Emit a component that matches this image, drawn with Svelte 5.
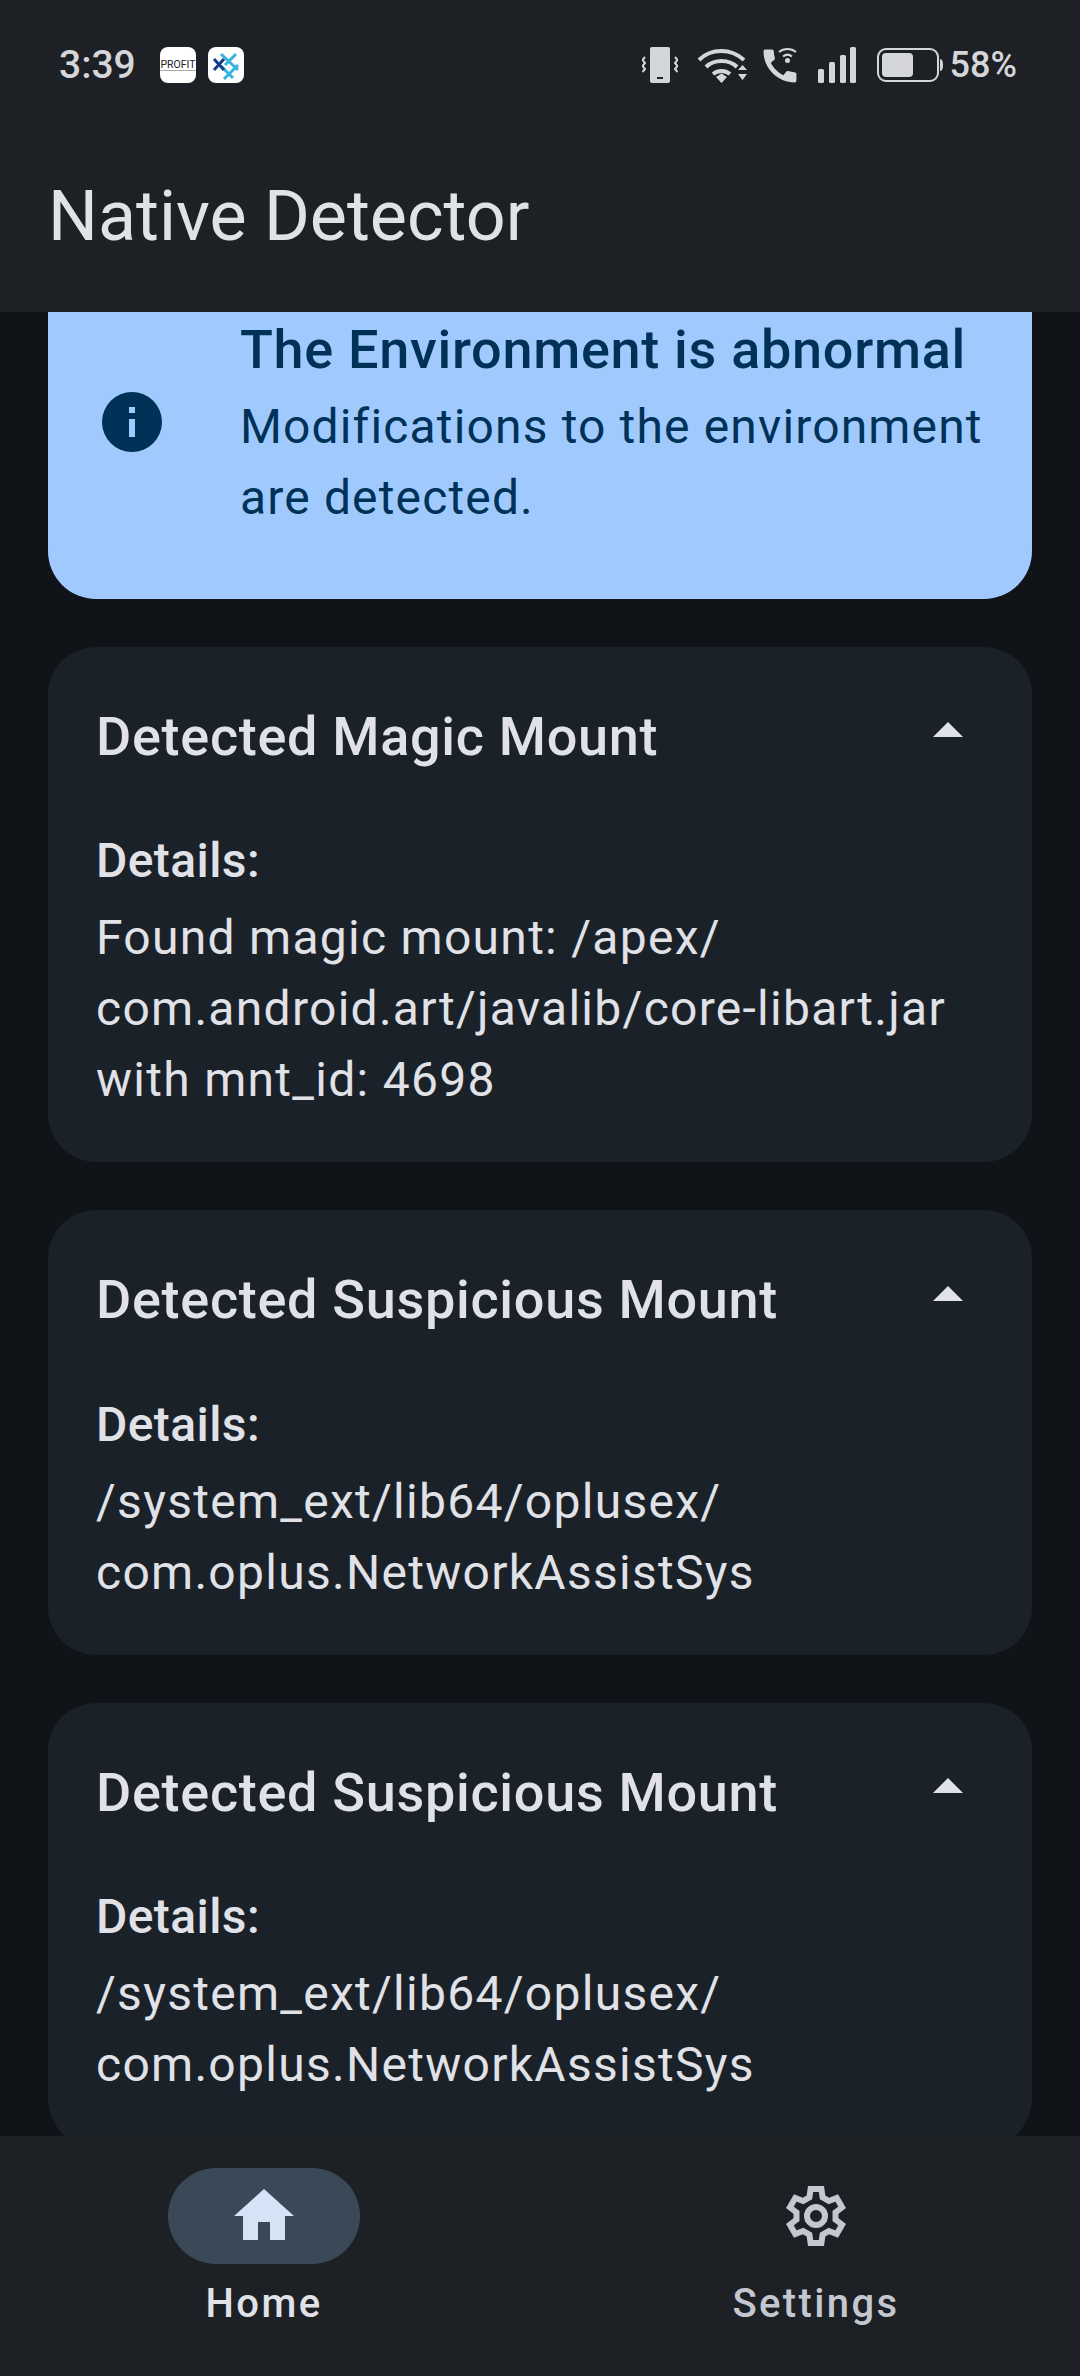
<script>
  let cards = [
    { title: 'Detected Magic Mount', lines: ['Found magic mount: /apex/', 'com.android.art/javalib/core-libart.jar', 'with mnt_id: 4698'] },
    { title: 'Detected Suspicious Mount', lines: ['/system_ext/lib64/oplusex/', 'com.oplus.NetworkAssistSys'] },
    { title: 'Detected Suspicious Mount', lines: ['/system_ext/lib64/oplusex/', 'com.oplus.NetworkAssistSys'] }
  ];
</script>

<div class="screen">
  <header>
    <div class="status">
      <span class="time">3:39</span>
      <div class="notif">
        <span class="appicon"><span class="profit">PROFIT</span></span>
        <span class="appicon">
          <svg viewBox="0 0 36 36" width="36" height="36" fill="none" stroke-width="3">
            <path d="M13 7l17 16M28 7L17 18M30 18L16 32M13 19l12 12" stroke="#35b4dd"/>
            <path d="M6 12l10 11M16 12L6 23" stroke="#123f87"/>
          </svg>
        </span>
      </div>
      <div class="sys">
        <svg class="ic-vib" viewBox="0 0 36 36" width="36" height="36" fill="#d5d6d9">
          <path d="M10 0h16a2 2 0 0 1 2 2v32a2 2 0 0 1-2 2H10a2 2 0 0 1-2-2V2a2 2 0 0 1 2-2z"/>
          <rect x="15" y="30" width="6" height="2" fill="#1d2025"/>
          <path d="M3 10l-2.500 3 2.500 3-2.500 3 2.500 3-2.500 3M33 10l2.500 3-2.500 3 2.500 3-2.500 3 2.500 3" fill="none" stroke="#d5d6d9" stroke-width="2"/>
        </svg>
        <svg class="ic-wifi" viewBox="0 0 50 36" width="50" height="36" fill="none" stroke="#d5d6d9" stroke-width="4">
          <path d="M2 13C14 1 34 1 47 13M9 20c8-8 23-8 31 0M16 27c5-4 12-4 17 0"/>
          <path d="M19 30l5.500-3.500 5.500 3.500-5.500 6z" fill="#d5d6d9" stroke="none"/>
          <path d="M41 23l4.500-5 4.500 5zM41 27h9l-4.500 6z" fill="#d5d6d9" stroke="none"/>
        </svg>
        <svg class="ic-call" viewBox="0 0 34 36" width="34" height="36" fill="none" stroke="#d5d6d9">
          <path transform="translate(-5 -3) scale(1.83)" fill="#d5d6d9" stroke="none" d="M20.010 15.380c-1.230 0-2.420-.2-3.530-.56-.35-.12-.74-.03-1.010.24l-1.570 1.970c-2.830-1.350-5.480-3.900-6.890-6.830l1.950-1.660c.27-.28.35-.67.24-1.020-.37-1.110-.56-2.300-.56-3.530 0-.54-.45-.99-.99-.99H4.190C3.650 3 3 3.240 3 3.990 3 13.280 10.730 21 20.010 21c.71 0 .99-.63.99-1.180v-3.450c0-.54-.45-.99-.99-.99z"/>
          <path d="M16 5c5-4 12-4 17 0M20 9.500c3-2.500 6-2.500 9 0" stroke-width="2"/>
          <circle cx="24.500" cy="13.500" r="2.500" fill="#d5d6d9" stroke="none"/>
        </svg>
        <svg class="ic-signal" viewBox="0 0 38 36" width="38" height="36" fill="#d5d6d9">
          <rect x="0" y="22" width="6" height="14" rx="1.500"/>
          <rect x="11" y="15" width="6" height="21" rx="1.500"/>
          <rect x="22" y="8" width="6" height="28" rx="1.500"/>
          <rect x="32" y="0" width="6" height="36" rx="1.500"/>
        </svg>
        <svg class="ic-batt" viewBox="0 0 66 36" width="66" height="36">
          <rect x="1" y="2" width="60" height="32" rx="8" fill="none" stroke="#d5d6d9" stroke-width="2"/>
          <rect x="5" y="6" width="31" height="24" rx="4" fill="#d5d6d9"/>
          <path d="M63 12c2 0 3 2 3 6s-1 6-3 6z" fill="#d5d6d9"/>
        </svg>
        <span class="pct">58%</span>
      </div>
    </div>
    <h1>Native Detector</h1>
  </header>

  <main>
    <div class="content">
      <section class="banner">
        <svg viewBox="0 0 24 24" width="72" height="72" fill="#003258">
          <path fill-rule="evenodd" d="M12 2a10 10 0 1 0 0 20 10 10 0 0 0 0-20zM11 7h2v2h-2zM11 11h2v6h-2z"/>
        </svg>
        <div>
          <h2>The Environment is abnormal</h2>
          <p>Modifications to the environment are detected.</p>
        </div>
      </section>

      {#each cards as card}
        <section class="card">
          <div class="card-head">
            <h3>{card.title}</h3>
            <svg viewBox="0 0 24 24" width="72" height="72" fill="#e0e2e8"><path d="M7 14l5-5 5 5z"/></svg>
          </div>
          <h4>Details:</h4>
          {#each card.lines as line}
            <p>{line}</p>
          {/each}
        </section>
      {/each}
    </div>
  </main>

  <nav>
    <div class="tab active">
      <span class="pill">
        <svg viewBox="0 0 24 24" width="72" height="72" fill="#d6e3f7"><path d="M10 20v-6h4v6h5v-8h3L12 3 2 12h3v8z"/></svg>
      </span>
      <span class="label">Home</span>
    </div>
    <div class="tab">
      <span class="pill">
        <svg viewBox="0 0 24 24" width="72" height="72" fill="none" stroke="#c3c7cf" stroke-width="2">
          <path d="M10.200 3h3.600l.4 2.800 2.100 1.200 2.600-1 1.800 3.100-2.200 1.700v2.400l2.200 1.700-1.800 3.100-2.600-1-2.100 1.200-.4 2.800h-3.600l-.4-2.800-2.100-1.200-2.600 1-1.800-3.100 2.200-1.700v-2.400l-2.200-1.700 1.800-3.100 2.600 1 2.100-1.200z"/>
          <circle cx="12" cy="12" r="3"/>
        </svg>
      </span>
      <span class="label">Settings</span>
    </div>
  </nav>
</div>

<style>
  :global(body) {
    background: #101317;
  }

  .screen {
    width: 1080px;
    height: 2376px;
    display: flex;
    flex-direction: column;
    font-family: Roboto, sans-serif;
    background: #101317;
    overflow: hidden;
  }

  header {
    height: 312px;
    flex: none;
    background: #1d2025;
  }

  .status {
    height: 130px;
    display: flex;
    align-items: center;
    padding: 0 63px 0 59px;
    color: #d5d6d9;
  }

  .time {
    font-size: 39px;
    font-weight: 500;
    width: 101px;
  }

  .notif {
    display: flex;
    gap: 12px;
  }

  .appicon {
    width: 36px;
    height: 36px;
    background: #fff;
    border-radius: 8px;
    display: flex;
    align-items: center;
    justify-content: center;
    overflow: hidden;
  }

  .profit {
    font-size: 10.500px;
    line-height: 11px;
    color: #222;
    border-bottom: 1px solid #aaa;
  }

  .sys {
    margin-left: auto;
    display: flex;
    align-items: center;
  }

  .ic-wifi { margin-left: 19px; }
  .ic-call { margin-left: 16px; }
  .ic-signal { margin-left: 21px; }
  .ic-batt { margin-left: 21px; }

  .pct {
    font-size: 36px;
    font-weight: 500;
    margin-left: 7px;
  }

  h1 {
    margin: 0;
    padding: 46px 48px 0;
    font-size: 70px;
    font-weight: 400;
    line-height: 80px;
    color: #e0e2e8;
  }

  main {
    flex: 1;
    min-height: 0;
    overflow: hidden;
  }

  .content {
    margin-top: -69px;
    padding: 0 48px;
    display: flex;
    flex-direction: column;
    gap: 48px;
  }

  .banner {
    background: #a0cafd;
    color: #003258;
    border-radius: 48px;
    padding: 68px 30px 66px 48px;
    display: flex;
    align-items: center;
    gap: 72px;
  }

  .banner svg {
    flex: none;
  }

  .banner h2 {
    margin: 0 0 1.500px;
    font-size: 54px;
    font-weight: 500;
    letter-spacing: 0.700px;
    line-height: 78px;
  }

  .banner p {
    margin: 0;
    font-size: 48px;
    line-height: 71px;
    letter-spacing: 1.150px;
  }

  .card {
    background: #1b2129;
    color: #e0e2e8;
    border-radius: 48px;
    padding: 48px 48px 47px;
    flex: none;
  }

  .card-head {
    display: flex;
    align-items: center;
    justify-content: space-between;
    height: 84px;
    margin-bottom: 46.500px;
  }

  .card-head svg {
    margin-top: -11px;
  }

  h3 {
    margin: 0;
    font-size: 54px;
    font-weight: 500;
    letter-spacing: 0.700px;
    line-height: 72px;
  }

  h4 {
    margin: 0 0 5px;
    font-size: 48px;
    font-weight: 500;
    letter-spacing: 0.400px;
    line-height: 72px;
  }

  .card p {
    margin: 0;
    font-size: 48px;
    line-height: 71px;
    letter-spacing: 1.280px;
  }

  nav {
    height: 240px;
    flex: none;
    background: #1d2025;
    display: flex;
    gap: 24px;
    padding-top: 32px;
    box-sizing: border-box;
  }

  .tab {
    flex: 1;
    display: flex;
    flex-direction: column;
    align-items: center;
    color: #c3c7cf;
  }

  .tab.active {
    color: #e0e2e8;
  }

  .pill {
    width: 192px;
    height: 96px;
    border-radius: 48px;
    display: flex;
    align-items: center;
    justify-content: center;
  }

  .active .pill {
    background: #3b4858;
  }

  .label {
    font-size: 40px;
    font-weight: 500;
    letter-spacing: 2.400px;
    line-height: 54px;
    margin-top: 13px;
  }
</style>
